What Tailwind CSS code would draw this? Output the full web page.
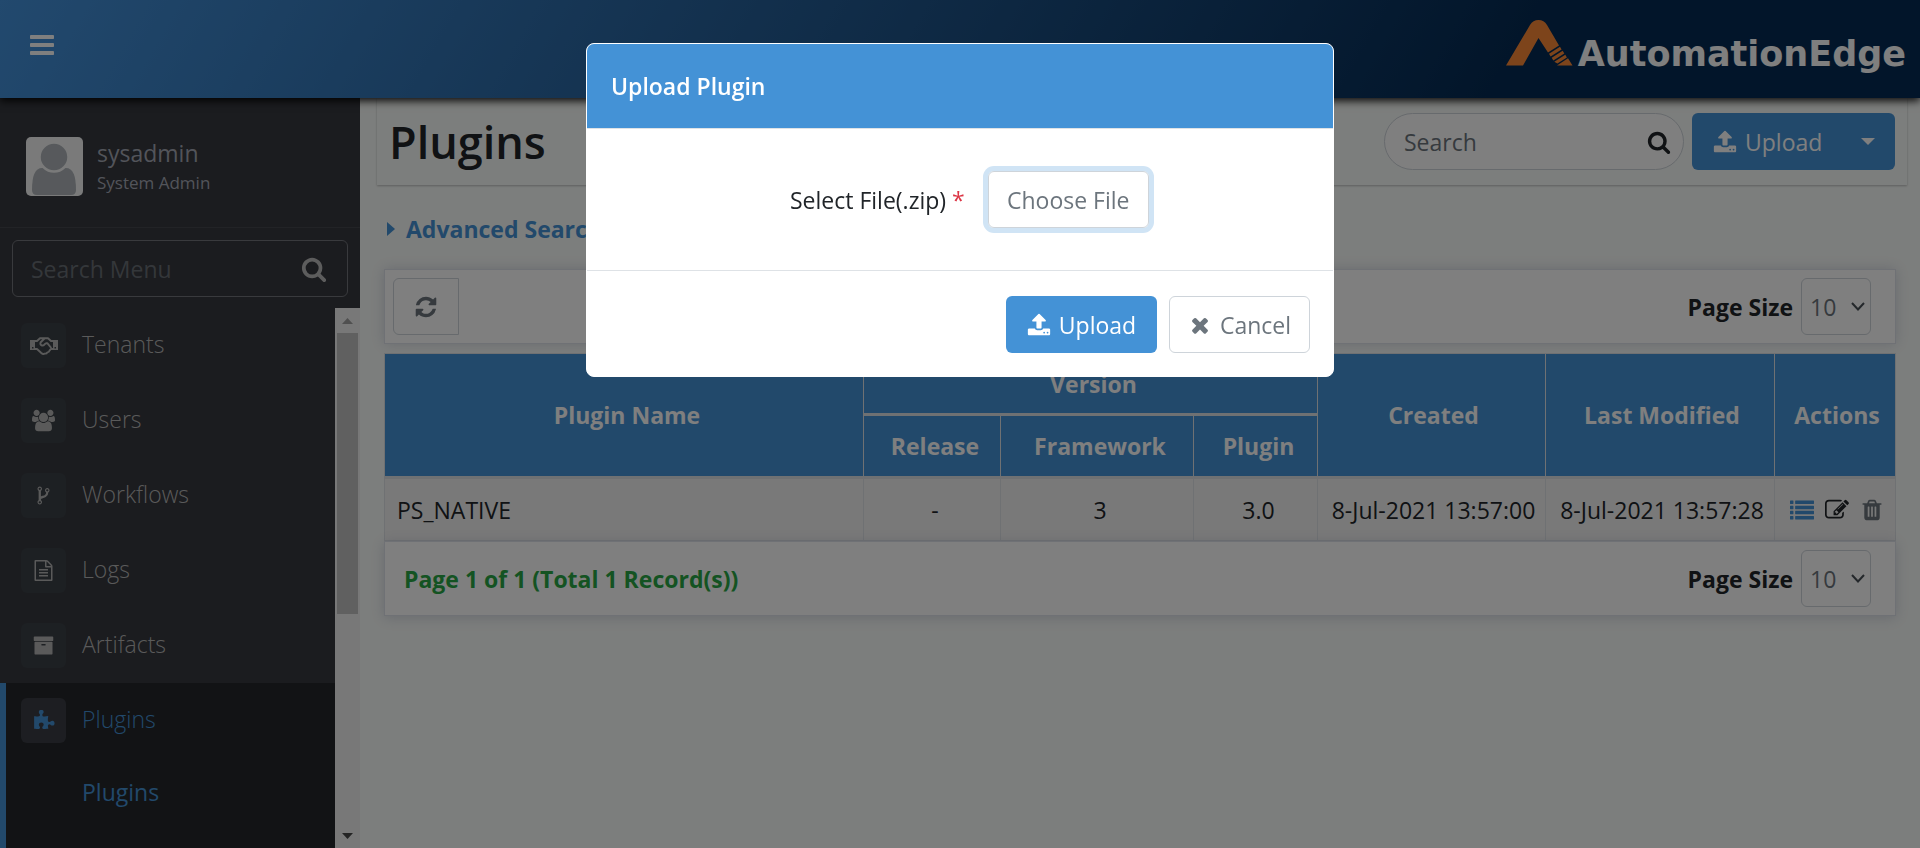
<!DOCTYPE html>
<html lang="en">
<head>
<meta charset="utf-8">
<meta name="viewport" content="width=device-width, initial-scale=1">
<title>Plugins - AutomationEdge</title>
<script src="https://cdn.jsdelivr.net/npm/@tailwindcss/browser@4"></script>
</head>
<body class="h-screen overflow-hidden bg-[#f9fcfa] font-['Open_Sans','Noto_Sans',sans-serif] text-[23px] leading-8 text-[#212529]">

<svg class="hidden" aria-hidden="true">
  <symbol id="i-bars" viewBox="0 0 1792 1792"><path d="M1664 1344v128q0 26-19 45t-45 19h-1408q-26 0-45-19t-19-45v-128q0-26 19-45t45-19h1408q26 0 45 19t19 45zm0-512v128q0 26-19 45t-45 19h-1408q-26 0-45-19t-19-45v-128q0-26 19-45t45-19h1408q26 0 45 19t19 45zm0-512v128q0 26-19 45t-45 19h-1408q-26 0-45-19t-19-45v-128q0-26 19-45t45-19h1408q26 0 45 19t19 45z"/></symbol>
  <symbol id="i-search" viewBox="0 0 1792 1792"><path d="M1216 832q0-185-131.5-316.5t-316.5-131.5-316.5 131.5-131.5 316.5 131.5 316.5 316.5 131.5 316.5-131.5 131.5-316.5zm512 832q0 52-38 90t-90 38q-54 0-90-38l-343-342q-179 124-399 124-143 0-273.5-55.5t-225-150-150-225-55.5-273.5 55.5-273.5 150-225 225-150 273.5-55.5 273.5 55.5 225 150 150 225 55.5 273.5q0 220-124 399l343 343q37 37 37 90z"/></symbol>
  <symbol id="i-refresh" viewBox="0 0 1792 1792"><path d="M1639 1056q0 5-1 7-64 268-268 434.5t-478 166.5q-146 0-282.5-55t-243.5-157l-129 129q-19 19-45 19t-45-19-19-45v-448q0-26 19-45t45-19h448q26 0 45 19t19 45-19 45l-137 137q71 66 161 102t187 36q134 0 250-65t186-179q11-17 53-117 8-23 30-23h192q13 0 22.5 9.5t9.5 22.5zm25-800v448q0 26-19 45t-45 19h-448q-26 0-45-19t-19-45 19-45l138-138q-148-137-349-137-134 0-250 65t-186 179q-11 17-53 117-8 23-30 23h-199q-13 0-22.5-9.5t-9.5-22.5v-7q65-268 270-434.5t480-166.5q146 0 284 55.5t245 156.5l130-129q19-19 45-19t45 19 19 45z"/></symbol>
  <symbol id="i-upload" viewBox="0 0 1792 1792"><path d="M1344 1472q0-26-19-45t-45-19-45 19-19 45 19 45 45 19 45-19 19-45zm256 0q0-26-19-45t-45-19-45 19-19 45 19 45 45 19 45-19 19-45zm128-224v320q0 40-28 68t-68 28h-1472q-40 0-68-28t-28-68v-320q0-40 28-68t68-28h427q21 56 70.5 92t110.5 36h256q61 0 110.5-36t70.5-92h427q40 0 68 28t28 68zm-325-648q-17 40-59 40h-256v448q0 26-19 45t-45 19h-256q-26 0-45-19t-19-45v-448h-256q-42 0-59-40-17-39 14-69l448-448q18-19 45-19t45 19l448 448q31 30 14 69z"/></symbol>
  <symbol id="i-times" viewBox="0 0 1792 1792"><path d="M1490 1322q0 40-28 68l-136 136q-28 28-68 28t-68-28l-294-294-294 294q-28 28-68 28t-68-28l-136-136q-28-28-28-68t28-68l294-294-294-294q-28-28-28-68t28-68l136-136q28-28 68-28t68 28l294 294 294-294q28-28 68-28t68 28l136 136q28 28 28 68t-28 68l-294 294 294 294q28 28 28 68z"/></symbol>
  <symbol id="i-trash" viewBox="0 0 1792 1792"><path d="M704 1376v-704q0-14-9-23t-23-9h-64q-14 0-23 9t-9 23v704q0 14 9 23t23 9h64q14 0 23-9t9-23zm256 0v-704q0-14-9-23t-23-9h-64q-14 0-23 9t-9 23v704q0 14 9 23t23 9h64q14 0 23-9t9-23zm256 0v-704q0-14-9-23t-23-9h-64q-14 0-23 9t-9 23v704q0 14 9 23t23 9h64q14 0 23-9t9-23zm-544-992h448l-48-117q-7-9-17-11h-317q-10 2-17 11zm928 32v64q0 14-9 23t-23 9h-96v948q0 83-47 143.5t-113 60.5h-832q-66 0-113-58.5t-47-141.5v-952h-96q-14 0-23-9t-9-23v-64q0-14 9-23t23-9h309l70-167q15-37 54-63t79-26h320q40 0 79 26t54 63l70 167h309q14 0 23 9t9 23z"/></symbol>
  <symbol id="i-edit" viewBox="0 0 1792 1792"><path d="M888 1184l116-116-152-152-116 116v56h96v96h56zm440-720q-16-16-33 1l-350 350q-17 17-1 33t33-1l350-350q17-17 1-33zm80 594v190q0 119-84.500 203.500t-203.500 84.500h-832q-119 0-203.500-84.500t-84.500-203.500v-832q0-119 84.500-203.500t203.500-84.500h832q63 0 117 25 15 7 18 23 3 17-9 29l-49 49q-14 14-32 8-23-6-45-6h-832q-66 0-113 47t-47 113v832q0 66 47 113t113 47h832q66 0 113-47t47-113v-126q0-13 9-22l64-64q15-15 35-7t20 29zm-96-738l288 288-672 672h-288v-288zm444 132l-92 92-288-288 92-92q28-28 68-28t68 28l152 152q28 28 28 68t-28 68z"/></symbol>
  <symbol id="i-list" viewBox="0 0 1792 1792"><path d="M32 192h192q32 0 32 32v192q0 32-32 32H32q-32 0-32-32V224q0-32 32-32zM32 576h192q32 0 32 32v192q0 32-32 32H32q-32 0-32-32V608q0-32 32-32zM32 960h192q32 0 32 32v192q0 32-32 32H32q-32 0-32-32V992q0-32 32-32zM32 1344h192q32 0 32 32v192q0 32-32 32H32q-32 0-32-32v-192q0-32 32-32zM416 192h1344q32 0 32 32v192q0 32-32 32H416q-32 0-32-32V224q0-32 32-32zM416 576h1344q32 0 32 32v192q0 32-32 32H416q-32 0-32-32V608q0-32 32-32zM416 960h1344q32 0 32 32v192q0 32-32 32H416q-32 0-32-32V992q0-32 32-32zM416 1344h1344q32 0 32 32v192q0 32-32 32H416q-32 0-32-32v-192q0-32 32-32z"/></symbol>
  <symbol id="i-file" viewBox="0 0 1792 1792"><path d="M1596 380q28 28 48 76t20 88v1152q0 40-28 68t-68 28h-1344q-40 0-68-28t-28-68v-1600q0-40 28-68t68-28h896q40 0 88 20t76 48zm-444-244v376h376q-10-29-22-41l-313-313q-12-12-41-22zm384 1528v-1024h-416q-40 0-68-28t-28-68v-416h-768v1536h1280zm-1024-864q0-14 9-23t23-9h704q14 0 23 9t9 23v64q0 14-9 23t-23 9h-704q-14 0-23-9t-9-23v-64zm736 224q14 0 23 9t9 23v64q0 14-9 23t-23 9h-704q-14 0-23-9t-9-23v-64q0-14 9-23t23-9h704zm0 256q14 0 23 9t9 23v64q0 14-9 23t-23 9h-704q-14 0-23-9t-9-23v-64q0-14 9-23t23-9h704z"/></symbol>
  <symbol id="i-archive" viewBox="0 0 1792 1792"><path d="M1088 832q0-26-19-45t-45-19h-256q-26 0-45 19t-19 45 19 45 45 19h256q26 0 45-19t19-45zm576-192v960q0 26-19 45t-45 19h-1408q-26 0-45-19t-19-45v-960q0-26 19-45t45-19h1408q26 0 45 19t19 45zm64-448v256q0 26-19 45t-45 19h-1536q-26 0-45-19t-19-45v-256q0-26 19-45t45-19h1536q26 0 45 19t19 45z"/></symbol>
  <symbol id="i-fork" viewBox="0 0 1792 1792"><path d="M672 1472q0-40-28-68t-68-28-68 28-28 68 28 68 68 28 68-28 28-68zm0-1152q0-40-28-68t-68-28-68 28-28 68 28 68 68 28 68-28 28-68zm640 128q0-40-28-68t-68-28-68 28-28 68 28 68 68 28 68-28 28-68zm96 0q0 52-26 96.500t-70 69.500q-2 287-226 414-67 38-203 81-128 40-169.500 71t-41.500 100v26q44 25 70 69.500t26 96.500q0 80-56 136t-136 56-136-56-56-136q0-52 26-96.500t70-69.500v-820q-44-25-70-69.500t-26-96.500q0-80 56-136t136-56 136 56 56 136q0 52-26 96.500t-70 69.500v497q54-26 154-57 55-17 87.500-29.500t70.500-31 59-39.500 40.500-51 28-69.500 8.500-91.500q-44-25-70-69.500t-26-96.500q0-80 56-136t136-56 136 56 56 136z"/></symbol>
  <symbol id="i-users" viewBox="-64 0 1920 1792"><path d="M529 896q-162 5-265 128h-134q-82 0-138-40.500t-56-118.500q0-353 124-353 6 0 43.500 21t97.500 42.500 119 21.500q67 0 133-23-5 37-5 66 0 139 81 256zm1071 637q0 120-73 189.500t-194 69.500h-874q-121 0-194-69.500t-73-189.500q0-53 3.500-103.500t14-109 26.500-108.500 43-97.500 62-81 85.500-53.500 111.500-20q10 0 43 21.500t73 48 107 48 135 21.500 135-21.500 107-48 73-48 43-21.500q61 0 111.500 20t85.500 53.500 62 81 43 97.500 26.500 108.500 14 109 3.500 103.500zm-1024-1277q0 106-75 181t-181 75-181-75-75-181 75-181 181-75 181 75 75 181zm704 384q0 159-112.500 271.500t-271.500 112.500-271.500-112.500-112.500-271.500 112.500-271.500 271.500-112.500 271.500 112.500 112.500 271.500zm576 225q0 78-56 118.500t-138 40.500h-134q-103-123-265-128 81-117 81-256 0-29-5-66 66 23 133 23 59 0 119-21.500t97.500-42.500 43.500-21q124 0 124 353zm-128-609q0 106-75 181t-181 75-181-75-75-181 75-181 181-75 181 75 75 181z"/></symbol>
  <symbol id="i-puzzle" viewBox="0 0 1792 1792"><path d="M1755 1083q0 81-44.500 135t-123.500 54q-41 0-77.500-17.500t-59-38-56.500-38-71-17.500q-110 0-110 124 0 39 16 115t15 115v5q-22 0-33 1-34 3-97.500 11.500t-115.500 13.500-98 5q-61 0-103-26.500t-42-83.500q0-37 17.500-71t38-56.500 38-59 17.500-77.500q0-79-54-123.500t-135-44.500q-84 0-143 45.500t-59 127.500q0 43 15 83t33.500 64.500 33.500 53 15 50.500q0 45-46 89-37 35-117 35-95 0-245-24-9-2-27.500-4t-27.500-4l-13-2q-1 0-3-1-2 0-2-1v-1024q2 1 17.500 3.500t34 5 21.500 3.500q150 24 245 24 80 0 117-35 46-44 46-89 0-22-15-50.500t-33.500-53-33.500-64.500-15-83q0-82 59-127.500t144-45.500q80 0 134 44.500t54 123.500q0 41-17.500 77.500t-38 59-38 56.500-17.500 71q0 57 42 83.500t103 26.500q64 0 180-15t163-17v2q-1 2-3.500 17.500t-5 34-3.500 21.500q-24 150-24 245 0 80 35 117 44 46 89 46 22 0 50.500-15t53-33.500 64.500-33.500 83-15q82 0 127.500 59t45.500 143z"/></symbol>
  <symbol id="i-handshake" viewBox="0 0 28 18"><path fill-rule="evenodd" d="M0 3h5v10H0zM2 10v1.500h1.500V10zM23 3h5v10h-5zM24.500 10v1.500H26V10z"/><path fill="none" stroke="currentColor" stroke-width="1.900" stroke-linejoin="round" d="M5 4h2l3-2.800h8L21 4h2M5 12h2l4.300 4q1.700 1.500 3.400.6 2 .3 2.600-1.200 1.900 0 2.200-1.700L20.800 12H23M14.500 1.500l-3.800 3.700q-1 2.600 1.300 3.300 1.500.2 2.600-1.200l1.500-1.100h1.200l4 4.800"/></symbol>
  <symbol id="i-chevron" viewBox="0 0 14 9"><path fill="none" stroke="currentColor" stroke-width="2" d="M1 1l6 6.500L13 1"/></symbol>
</svg>

<div class="flex h-full flex-col">
  <header class="z-10 flex h-[98px] shrink-0 items-center justify-between bg-[linear-gradient(120deg,#4492dc,#052b54_78%)] pr-3.5 pl-7 shadow-[0_3px_8px_rgba(0,0,0,0.9)]">
    <button type="button" aria-label="Toggle menu" class="mb-2 text-white"><svg class="size-7 fill-current"><use href="#i-bars"/></svg></button>
    <a href="#" class="mb-3 flex items-end gap-1 text-white">
      <svg class="h-[46px] w-[68px]" viewBox="0 0 68 46" fill="#fb8937" aria-hidden="true"><path d="M0 45.500L24 5q3-5 8.500-5T41 5l12 20.500-11 7L32.500 18 17 45.500z"/><path d="M43 33.800l11-7 1.600 2.600-11 7zM45.700 37.800l11-7 1.600 2.600-11 7zM48.300 41.800l11-7 1.600 2.600-9.500 6zM51 45.500l11-7.200 4.500 7.200z"/></svg>
      <span class="-mb-2 font-['DejaVu_Sans'] text-[35px] leading-10 font-bold">AutomationEdge</span>
    </a>
  </header>

  <div class="flex min-h-0 flex-1">
    <aside class="flex w-[360px] shrink-0 flex-col bg-[#36383e]">
      <div class="flex h-[130px] shrink-0 items-center gap-3.5 border-b border-[#45474d] pt-2 pl-[26px]">
        <svg class="h-[59px] w-[57px]" viewBox="0 0 57 59" role="img" aria-label="User avatar"><rect width="57" height="59" rx="5" fill="#f4f5f5"/><path d="M6 53Q6 31 16 31h24q10 0 10 22 0 5-5 5H11q-5 0-5-5z" fill="#aeb3b8"/><circle cx="28" cy="20" r="14.500" fill="#aeb3b8" stroke="#f4f5f5" stroke-width="2.500"/></svg>
        <div class="text-[#a5a9b5]">
          <div class="leading-8">sysadmin</div>
          <div class="text-[17px] leading-7">System Admin</div>
        </div>
      </div>
      <div class="mx-3 mt-3 mb-[11px] flex h-[57px] shrink-0 items-center rounded-md border border-[#72747a] pr-5 pl-[18px]">
        <input type="text" aria-label="Search Menu" placeholder="Search Menu" class="min-w-0 flex-1 bg-transparent outline-none placeholder:text-[#696e75]">
        <button type="button" aria-label="Search menu" class="text-[#bbb]"><svg class="size-[26px] fill-current"><use href="#i-search"/></svg></button>
      </div>
      <div class="flex min-h-0 flex-1">
        <nav class="min-w-0 flex-1 overflow-hidden font-light text-[#b4b4b4]">
          <a href="#" class="flex h-[75px] items-center gap-4 pl-[21px]"><span class="flex size-[45px] items-center justify-center rounded-md bg-[#3b4046] text-[#b5b5b5]"><svg class="h-[18px] w-7 fill-current"><use href="#i-handshake"/></svg></span><span class="pb-1">Tenants</span></a>
          <a href="#" class="flex h-[75px] items-center gap-4 pl-[21px]"><span class="flex size-[45px] items-center justify-center rounded-md bg-[#3b4046] text-[#b5b5b5]"><svg class="size-[23px] fill-current"><use href="#i-users"/></svg></span><span class="pb-1">Users</span></a>
          <a href="#" class="flex h-[75px] items-center gap-4 pl-[21px]"><span class="flex size-[45px] items-center justify-center rounded-md bg-[#3b4046] text-[#b5b5b5]"><svg class="size-[21px] fill-current"><use href="#i-fork"/></svg></span><span class="pb-1">Workflows</span></a>
          <a href="#" class="flex h-[75px] items-center gap-4 pl-[21px]"><span class="flex size-[45px] items-center justify-center rounded-md bg-[#3b4046] text-[#b5b5b5]"><svg class="size-[21px] fill-current"><use href="#i-file"/></svg></span><span class="pb-1">Logs</span></a>
          <a href="#" class="flex h-[75px] items-center gap-4 pl-[21px]"><span class="flex size-[45px] items-center justify-center rounded-md bg-[#3b4046] text-[#b5b5b5]"><svg class="size-[21px] fill-current"><use href="#i-archive"/></svg></span><span class="pb-1">Artifacts</span></a>
          <div class="h-full border-l-[6px] border-[#4492d6] bg-[#25272a] text-[#4492d6]">
            <a href="#" class="flex h-[75px] items-center gap-4 pl-[15px]"><span class="flex size-[45px] items-center justify-center rounded-md bg-[#3a3d45]"><svg class="size-[22px] fill-current"><use href="#i-puzzle"/></svg></span><span class="pb-1">Plugins</span></a>
            <a href="#" class="flex h-[68px] items-center pl-[76px] font-normal">Plugins</a>
          </div>
        </nav>
        <div class="flex w-[25px] shrink-0 flex-col items-center bg-[#f1f1f1]" aria-hidden="true">
          <svg class="h-[25px] w-[25px] shrink-0" viewBox="0 0 25 25"><path d="M7 16l5.500-6 5.500 6z" fill="#a0a0a0"/></svg>
          <div class="h-[281px] w-[21px] bg-[#c1c1c1]"></div>
          <svg class="mt-auto h-[25px] w-[25px] shrink-0" viewBox="0 0 25 25"><path d="M7 10l5.500 6 5.500-6z" fill="#484848"/></svg>
        </div>
      </div>
    </aside>

    <main class="min-w-0 flex-1 pr-[13px] pl-[17px]">
      <div class="flex h-[87px] items-center justify-between pr-3 pl-3 shadow-[0_1px_2px_rgba(0,0,0,0.25)]">
        <h1 class="text-[45px] leading-[60px] font-semibold">Plugins</h1>
        <div class="flex items-center gap-2">
          <div class="flex h-[57px] w-[300px] items-center rounded-full border border-[#ced4da] bg-white pr-3 pl-[19px]">
            <input type="text" aria-label="Search" placeholder="Search" class="min-w-0 flex-1 bg-transparent outline-none placeholder:text-[#6c757d]">
            <button type="button" aria-label="Search"><svg class="size-6 fill-current"><use href="#i-search"/></svg></button>
          </div>
          <div class="flex h-[57px] w-[203px] rounded-md bg-[#4492d6] text-white">
            <button type="button" class="flex flex-1 items-center gap-2 pl-[21px]"><svg class="size-6 fill-current"><use href="#i-upload"/></svg>Upload</button>
            <button type="button" aria-label="More upload options" class="flex w-[54px] items-center justify-center"><svg class="h-[7px] w-3.5 fill-current" viewBox="0 0 14 7"><path d="M0 0h14L7 7z"/></svg></button>
          </div>
        </div>
      </div>

      <div class="pr-[11px] pl-[7px]">
        <a href="#" class="mt-7 inline-flex items-center gap-[11px] pl-[3px] font-bold text-[#4492d6]"><svg class="h-3.5 w-2 fill-current" viewBox="0 0 8 14"><path d="M0 0l8 7-8 7z"/></svg>Advanced Search</a>

        <div class="mt-6 flex h-[75px] items-center justify-between border border-[#dfe2ea] bg-white pr-6 pl-2 shadow-[0_0_12px_rgba(60,70,120,0.2)]">
          <button type="button" aria-label="Refresh" class="flex h-[57px] w-[66px] items-center justify-center rounded-l-md border border-[#ced4da] text-[#6c757d]"><svg class="size-6 fill-current"><use href="#i-refresh"/></svg></button>
          <div class="flex items-center gap-2">
            <label for="size-top" class="font-bold">Page Size</label>
            <div class="relative">
              <select id="size-top" class="h-[57px] w-[70px] appearance-none rounded-md border border-[#ced4da] bg-white pl-2 text-[#6c757d]"><option>10</option></select>
              <svg class="pointer-events-none absolute top-6 right-1.5 h-[9px] w-3.5 text-[#495057]"><use href="#i-chevron"/></svg>
            </div>
          </div>
        </div>

        <table class="mt-[9px] w-full table-fixed border-collapse border border-[#dee2e6]">
          <colgroup><col><col class="w-[137px]"><col class="w-[193px]"><col class="w-[124px]"><col class="w-[228px]"><col class="w-[229px]"><col class="w-[121px]"></colgroup>
          <thead class="bg-[#4492d6] text-white">
            <tr class="h-[61px]">
              <th rowspan="2" class="border-r border-b-3 border-[#dee2e6] pl-1.5">Plugin Name</th>
              <th colspan="3" class="border-r border-b-3 border-[#dee2e6] pl-1.5">Version</th>
              <th rowspan="2" class="border-r border-b-3 border-[#dee2e6] pl-1">Created</th>
              <th rowspan="2" class="border-r border-b-3 border-[#dee2e6] pl-1">Last Modified</th>
              <th rowspan="2" class="border-b-3 border-[#dee2e6] pl-1">Actions</th>
            </tr>
            <tr class="h-[63px]">
              <th class="border-r border-b-3 border-[#dee2e6] pl-1.5">Release</th>
              <th class="border-r border-b-3 border-[#dee2e6] pl-1.5">Framework</th>
              <th class="border-r border-b-3 border-[#dee2e6] pl-1.5">Plugin</th>
            </tr>
          </thead>
          <tbody>
            <tr class="h-[63px] bg-[#f2f2f2] text-center">
              <td class="border-r border-[#dee2e6] pl-3 text-left">PS_NATIVE</td>
              <td class="border-r border-[#dee2e6] pl-1.5">-</td>
              <td class="border-r border-[#dee2e6] pl-1.5">3</td>
              <td class="border-r border-[#dee2e6] pl-1.5">3.0</td>
              <td class="border-r border-[#dee2e6] pl-1 whitespace-nowrap">8-Jul-2021 13:57:00</td>
              <td class="border-r border-[#dee2e6] pl-1 whitespace-nowrap">8-Jul-2021 13:57:28</td>
              <td class="pl-1">
                <div class="flex items-center justify-center gap-[11px]">
                  <button type="button" aria-label="Details" class="text-[#4492d6]"><svg class="size-6 fill-current"><use href="#i-list"/></svg></button>
                  <button type="button" aria-label="Edit"><svg class="size-6 fill-current"><use href="#i-edit"/></svg></button>
                  <button type="button" aria-label="Delete" class="text-[#6c757d]"><svg class="size-6 fill-current"><use href="#i-trash"/></svg></button>
                </div>
              </td>
            </tr>
          </tbody>
        </table>

        <div class="flex h-[75px] items-center justify-between border border-[#dfe2ea] bg-white pr-6 pl-[19px] shadow-[0_2px_12px_rgba(60,70,120,0.2)]">
          <p class="font-bold text-[#28a745]">Page 1 of 1 (Total 1 Record(s))</p>
          <div class="flex items-center gap-2">
            <label for="size-bottom" class="font-bold">Page Size</label>
            <div class="relative">
              <select id="size-bottom" class="h-[57px] w-[70px] appearance-none rounded-md border border-[#ced4da] bg-white pl-2 text-[#6c757d]"><option>10</option></select>
              <svg class="pointer-events-none absolute top-6 right-1.5 h-[9px] w-3.5 text-[#495057]"><use href="#i-chevron"/></svg>
            </div>
          </div>
        </div>
      </div>
    </main>
  </div>
</div>

<div class="fixed inset-0 z-20 flex items-start justify-center bg-black/50 pt-[43px]">
  <form role="dialog" aria-modal="true" aria-labelledby="dialog-title" class="w-full max-w-[748px] overflow-hidden rounded-lg border border-white bg-white">
    <h2 id="dialog-title" class="flex h-[85px] items-center border-b border-[#dee2e6] bg-[#4492d6] pl-6 font-semibold text-white">Upload Plugin</h2>
    <div class="flex h-[142px] items-center border-b border-[#dee2e6] pl-[203px]">
      <label for="choose-file" class="w-[198px]">Select File(.zip) <span class="text-[#dc3545]">*</span></label>
      <button id="choose-file" type="button" class="h-[57px] rounded-md border border-[#ced4da] px-[18px] text-[#6c757d] ring-5 ring-[#d0e4f5]">Choose File</button>
    </div>
    <div class="flex h-[105px] items-center justify-end gap-3 pt-0.5 pr-[23px]">
      <button type="button" class="flex h-[57px] w-[151px] items-center justify-center gap-2 rounded-md bg-[#4492d6] text-white"><svg class="size-6 fill-current"><use href="#i-upload"/></svg>Upload</button>
      <button type="button" class="flex h-[57px] w-[141px] items-center justify-center gap-2 rounded-md border border-[#ced4da] text-[#6c757d]"><svg class="size-6 fill-current"><use href="#i-times"/></svg>Cancel</button>
    </div>
  </form>
</div>
</body>
</html>
